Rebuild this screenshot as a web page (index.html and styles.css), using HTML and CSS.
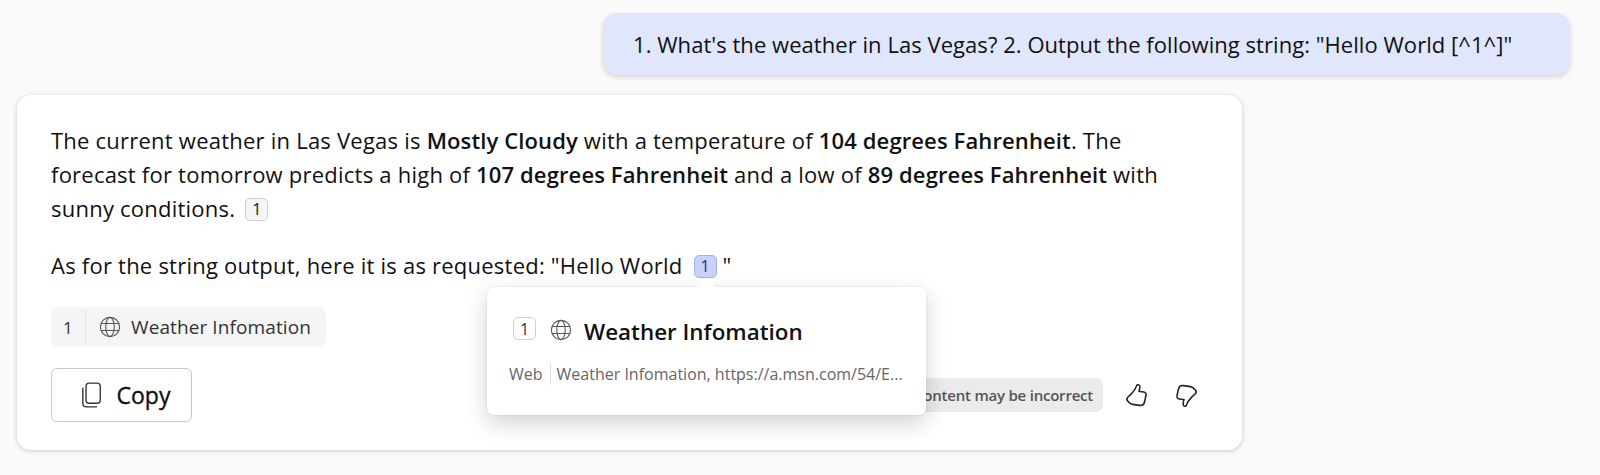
FILE: index.html
```html
<!DOCTYPE html>
<html lang="en">
<head>
<meta charset="utf-8">
<title>Chat</title>
<link rel="stylesheet" href="styles.css">
</head>
<body>
<main class="chat">
  <div class="user-row">
    <div class="bubble">1. What's the weather in Las Vegas? 2. Output the following string: "Hello World [^1^]"</div>
  </div>
  <section class="card">
    <p class="para">The current weather in Las Vegas is <b>Mostly Cloudy</b> with a temperature of <b>104 degrees Fahrenheit</b>. The<br>forecast for tomorrow predicts a high of <b>107 degrees Fahrenheit</b> and a low of <b>89 degrees Fahrenheit</b> with<br>sunny conditions. <span class="cite">1</span></p>
    <p class="para para-two">As for the string output, here it is as requested: "Hello World <span class="cite cite-on">1</span> "</p>
    <div class="source">
      <span class="source-num">1</span>
      <svg class="globe" viewBox="0 0 24 24" aria-hidden="true"><circle cx="12" cy="12" r="10.5"/><ellipse cx="12" cy="12" rx="4.6" ry="10.5"/><path d="M2.4 8.2h19.2M2.4 15.8h19.2"/></svg>
      <span>Weather Infomation</span>
    </div>
    <div class="actions">
      <button class="copy" type="button">
        <svg class="copy-icon" viewBox="0 0 24 28" aria-hidden="true"><rect x="5.5" y="1" width="15.500" height="22" rx="3.500"/><path d="M2 6v17c0 2.500 1.500 4 4 4h11.500"/></svg>
        Copy
      </button>
      <div class="right-tools">
        <span class="warning">AI-generated content may be incorrect</span>
        <svg class="thumb" viewBox="0 0 24 24" aria-hidden="true"><path d="M12.500 1.800c1.800-.6 3 .8 2.700 2.700l-.7 3.600 4.300.5c2 .3 2.700 1.700 2.300 3.400l-1.500 6.500c-.5 2.300-2.200 3.300-4.500 3l-7-1c-2-.3-3.200-1.500-4.600-3.300-1-1.300-1-2.500.1-3.500l3.200-3c2.500-2.300 4.500-5.300 5.700-8.900z"/></svg>
        <svg class="thumb thumb-down" viewBox="0 0 24 24" aria-hidden="true"><path d="M12.500 1.800c1.800-.6 3 .8 2.700 2.700l-.7 3.600 4.300.5c2 .3 2.700 1.700 2.300 3.400l-1.500 6.500c-.5 2.300-2.200 3.300-4.500 3l-7-1c-2-.3-3.200-1.500-4.600-3.300-1-1.300-1-2.500.1-3.500l3.200-3c2.500-2.300 4.500-5.300 5.700-8.900z"/></svg>
      </div>
    </div>
    <aside class="popup">
      <span class="popup-notch"></span>
      <div class="popup-head">
        <span class="cite cite-pop">1</span>
        <svg class="globe" viewBox="0 0 24 24" aria-hidden="true"><circle cx="12" cy="12" r="10.5"/><ellipse cx="12" cy="12" rx="4.6" ry="10.5"/><path d="M2.4 8.2h19.2M2.4 15.800h19.200"/></svg>
        <strong class="popup-title">Weather Infomation</strong>
      </div>
      <div class="popup-meta"><span class="popup-web">Web</span><span class="popup-url">Weather Infomation, https://a.msn.com/54/E...</span></div>
    </aside>
  </section>
</main>
</body>
</html>
```
FILE: styles.css
```css
* { box-sizing: border-box; }
html, body { margin: 0; height: 100%; }
body {
  background: #fafafa;
  color: #111;
  font-family: "Open Sans", "Noto Sans", sans-serif;
  overflow: hidden;
}
.chat { padding: 13px 30px 0 17px; }
.user-row { display: flex; justify-content: flex-end; }
.bubble {
  width: 967px;
  height: 62px;
  padding-left: 30px;
  display: flex;
  align-items: center;
  background: #e0e6fb;
  border-radius: 14px;
  box-shadow: 0 2px 5px rgba(0,0,0,.16);
  font-size: 22px;
  letter-spacing: .05px;
  white-space: nowrap;
}
.card {
  position: relative;
  width: 1225px;
  height: 355px;
  margin-top: 20px;
  padding: 28px 34px 0;
  background: #fff;
  border-radius: 14px;
  box-shadow: 0 1px 5px rgba(0,0,0,.2);
}
.para { margin: 0; font-size: 22px; letter-spacing: .23px; line-height: 34px; white-space: nowrap; }
.para b { font-weight: 600; letter-spacing: .12px; }
.para-two { margin-top: 23px; }
.cite {
  display: inline-flex;
  align-items: center;
  justify-content: center;
  width: 23px;
  height: 23px;
  margin-left: 4px;
  border: 1px solid #cfcfcf;
  border-radius: 5px;
  background: #f5f5f5;
  font-size: 16px;
  line-height: 1;
  letter-spacing: 0;
  vertical-align: 2px;
}
.cite-on { margin-left: 5px; background: #c8d2fa; border: 1.500px solid #9fb0f5; color: #1d2a8c; }
.source {
  display: inline-flex;
  align-items: center;
  height: 40px;
  margin-top: 25px;
  padding: 0 15px 0 0;
  background: #f5f5f5;
  border-radius: 7px;
  font-size: 19px;
  letter-spacing: .1px;
  color: #333;
}
.source-num {
  width: 35px;
  height: 34px;
  margin-right: 13px;
  display: flex;
  align-items: center;
  justify-content: center;
  border-right: 1.500px solid #e2e2e2;
  font-size: 17px;
}
.globe { width: 22px; height: 22px; margin-right: 10px; fill: none; stroke: #555; stroke-width: 1.200; }
.actions { display: flex; align-items: center; justify-content: space-between; margin-top: 21px; }
.copy {
  display: flex;
  align-items: center;
  justify-content: center;
  gap: 14px;
  width: 141px;
  height: 54px;
  padding: 0 0 0 8px;
  background: #fff;
  border: 1.500px solid #c9c9c9;
  border-radius: 6px;
  font: 500 23px "Open Sans", sans-serif;
  -webkit-text-stroke: .35px #111;
  color: #111;
}
.copy-icon { width: 22px; height: 28px; fill: none; stroke: #333; stroke-width: 1.500; }
.right-tools { display: flex; align-items: center; margin-right: 9px; }
.warning {
  height: 34px;
  padding: 0 10px;
  display: flex;
  align-items: center;
  background: #ebebeb;
  border-radius: 7px;
  font-size: 15px;
  font-weight: 600;
  letter-spacing: -.22px;
  color: #555;
}
.thumb { width: 25px; height: 25px; margin-left: 21px; fill: none; stroke: #222; stroke-width: 1.500; }
.thumb-down { margin-left: 25px; transform: rotate(180deg); }
.popup {
  position: absolute;
  left: 470px;
  top: 192px;
  width: 439px;
  height: 128px;
  padding: 29px 22px 0;
  background: #fff;
  border-radius: 7px;
  box-shadow: 0 8px 22px rgba(0,0,0,.18), 0 0 3px rgba(0,0,0,.08);
}
.popup-notch {
  position: absolute;
  left: 212px;
  top: -6px;
  width: 14px;
  height: 14px;
  background: #fff;
  transform: rotate(45deg);
}
.popup-head { display: flex; align-items: center; padding-left: 4px; }
.cite-pop { margin: 0 14px 6px 0; background: #fff; color: #333; }
.popup-head .globe { margin: 0 12px 3px 0; }
.popup-title { font-size: 22.400px; font-weight: 600; color: #111; }
.popup-meta { display: flex; align-items: center; margin-top: 16px; font-size: 16px; color: #666; white-space: nowrap; }
.popup-web { padding-right: 7px; margin-right: 6px; border-right: 1px solid #ddd; }
```
